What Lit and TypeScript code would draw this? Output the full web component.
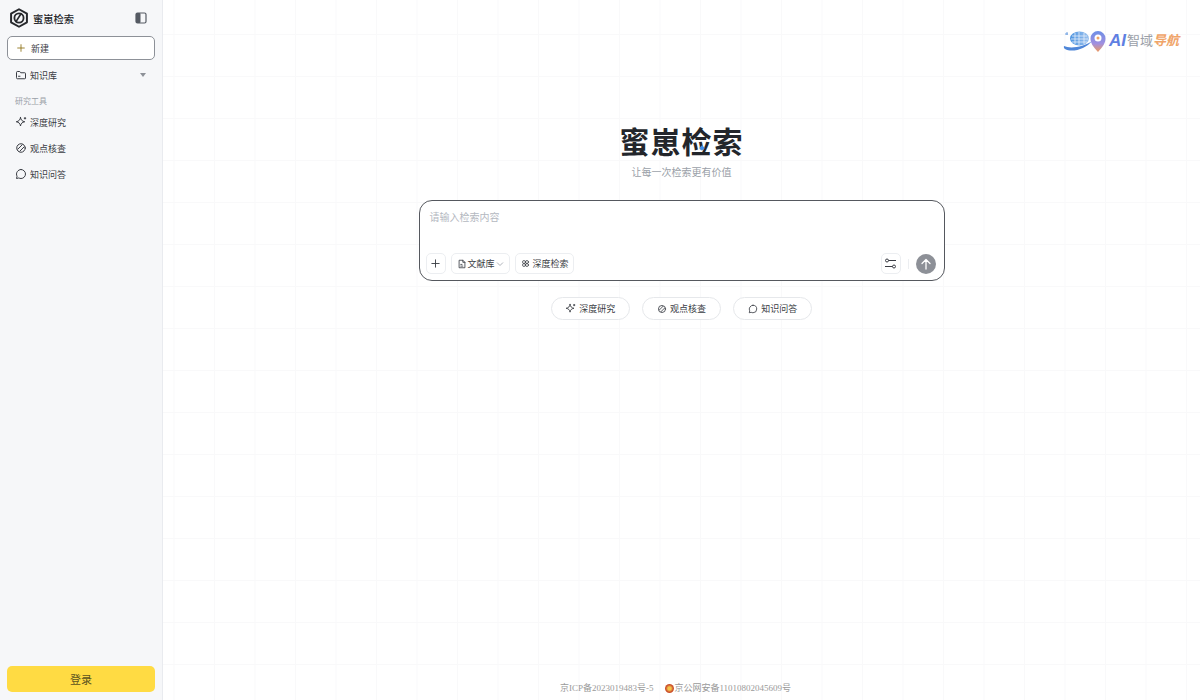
import { LitElement, html, css, svg } from "lit"
import { customElement } from "lit/decorators.js"

const icon = (body: unknown, size = 12) => html`<svg class="ic" width=${size} height=${size} viewBox="0 0 24 24" fill="none" stroke="currentColor" stroke-width="2" stroke-linecap="round" stroke-linejoin="round">${body}</svg>`

const sparkle = svg`<path d="M11 3c.8 5 3 7.500 8.500 8.500-5.500 1-7.700 3.500-8.500 8.500-.8-5-3-7.500-8.500-8.500C8 10.500 10.200 8 11 3z"/><path d="M20 3v3M18.500 4.500h3"/>`
const check = svg`<circle cx="12" cy="12" r="8.500"/><path d="M5.500 14.500L14.500 5.500M9.500 18.500L18.500 9.500"/>`
const bubble = svg`<path d="M12 3a9 9 0 0 1 0 18c-1.600 0-3.100-.4-4.400-1.100L3 21l1.100-4.600A9 9 0 0 1 12 3z"/>`
const folder = svg`<path d="M3 6.500A1.500 1.500 0 0 1 4.500 5h5l2 2.500h8A1.500 1.500 0 0 1 21 9v9a1.500 1.500 0 0 1-1.500 1.500h-15A1.500 1.500 0 0 1 3 18z"/><path d="M7 14.500h3"/>`
const plus = svg`<path d="M12 4v16M4 12h16"/>`
const doc = svg`<path d="M6 3h8l5 5v13H6z"/><path d="M14 3v5h5M9 13h3M9 17h5"/>`
const knots = svg`<circle cx="8" cy="8" r="4"/><circle cx="16" cy="8" r="4"/><circle cx="8" cy="16" r="4"/><circle cx="16" cy="16" r="4"/>`

@customElement("app-root")
export class AppRoot extends LitElement {
   render() {
      return html`
         <aside class="side">
            <div class="brand">
               <svg width="20" height="20" viewBox="0 0 24 24" fill="none" stroke="#26282c" stroke-width="2.400" stroke-linejoin="round">
                  <path d="M12 1.500l9.500 5.300v10.400L12 22.500l-9.500-5.300V6.800z"/>
                  <circle cx="12" cy="12" r="5.500" stroke-width="2.200"/>
                  <path d="M8 17L15 6" stroke-width="2"/>
               </svg>
               <span class="brand-name">蜜崽检索</span>
               <svg class="toggle" width="12" height="12" viewBox="0 0 12 12">
                  <rect x="1" y="1" width="10" height="10" rx="1.500" fill="none" stroke="#555a63" stroke-width="1.200"/>
                  <rect x="1" y="1" width="4.500" height="10" rx="1" fill="#555a63"/>
               </svg>
            </div>
            <button class="new"><span class="new-plus">${icon(plus, 10)}</span>新建</button>
            <div class="item first">${icon(folder)}<span>知识库</span><i class="caret"></i></div>
            <div class="group">研究工具</div>
            <div class="item">${icon(sparkle)}<span>深度研究</span></div>
            <div class="item">${icon(check)}<span>观点核查</span></div>
            <div class="item">${icon(bubble)}<span>知识问答</span></div>
            <div class="spacer"></div>
            <button class="login">登录</button>
         </aside>
         <main class="main">
            <div class="badge">
               <svg width="44" height="24" viewBox="0 0 44 24">
                  <defs>
                     <linearGradient id="brain" x1="0" x2="1"><stop offset="0" stop-color="#4d94e0"/><stop offset="1" stop-color="#9cc2ee"/></linearGradient>
                     <linearGradient id="pin" x1="0" x2="0" y1="0" y2="1"><stop offset="0" stop-color="#6d8fe6"/><stop offset=".6" stop-color="#a08fe0"/><stop offset="1" stop-color="#f09a5e"/></linearGradient>
                  </defs>
                  <path d="M1 17c6 3 20 1 28-5-6 8-20 12-27 8-1-.6-1.400-1.800-1-3z" fill="#4f86d8"/>
                  <ellipse cx="16.500" cy="9.500" rx="9.500" ry="7" fill="url(#brain)"/>
                  <path d="M9 7h15M8 10h17M9 13h15M16 3v13M12 4v11M21 4v11" stroke="#e4eefa" stroke-width=".8"/>
                  <path d="M2 5h3M4 3v3" stroke="#6d9fe0" stroke-width="1"/>
                  <path d="M35 23c-5-5.500-7.500-9-7.500-13.500a7.500 7.500 0 0 1 15 0C42.500 14 40 17.500 35 23z" fill="url(#pin)"/>
                  <circle cx="35" cy="9" r="3.500" fill="#fff"/>
                  <circle cx="35" cy="9" r="1.500" fill="#f0a468"/>
               </svg>
               <span class="ai">AI</span><span class="zy">智域</span><span class="dh">导航</span>
            </div>
            <div class="center">
               <h1 class="title">蜜崽检索<i class="spark"></i></h1>
               <div class="sub">让每一次检索更有价值</div>
               <div class="box">
                  <div class="ph">请输入检索内容</div>
                  <div class="tools">
                     <button class="chip square">${icon(plus, 11)}</button>
                     <button class="chip">${icon(doc, 10)}文献库<svg class="chev" width="8" height="8" viewBox="0 0 8 8" fill="none" stroke="#9a9fa8" stroke-width=".8"><path d="M1 2.500l3 3 3-3"/></svg></button>
                     <button class="chip deep">${icon(knots, 9)}<span>深度检索</span></button>
                     <div class="spacer"></div>
                     <button class="chip square">
                        <svg width="13" height="13" viewBox="0 0 13 13" fill="none" stroke="#3a3d44" stroke-width="1">
                           <circle cx="3" cy="3.500" r="1.500"/><path d="M4.500 3.500H12"/>
                           <circle cx="10" cy="9.500" r="1.500"/><path d="M1 9.500h7.500"/>
                        </svg>
                     </button>
                     <i class="sep"></i>
                     <button class="send">
                        <svg width="12" height="12" viewBox="0 0 12 12" fill="none" stroke="#fff" stroke-width="1.300" stroke-linecap="round" stroke-linejoin="round"><path d="M6 11V1.500M2 5.500l4-4 4 4"/></svg>
                     </button>
                  </div>
               </div>
               <div class="quick">
                  <button class="pill">${icon(sparkle, 11)}深度研究</button>
                  <button class="pill">${icon(check, 10)}观点核查</button>
                  <button class="pill">${icon(bubble, 10)}知识问答</button>
               </div>
            </div>
            <footer class="foot">
               <span>京ICP备2023019483号-5</span>
               <span class="police"><i class="emblem"></i>京公网安备11010802045609号</span>
            </footer>
         </main>
      `
   }

   static styles = css`
      :host {
         display: flex;
         width: 1200px;
         height: 700px;
         overflow: hidden;
         font-family: "Liberation Sans", "Noto Sans CJK SC", sans-serif;
         color: #3a3d44;
         font-size: 9px;
         background: #fff;
      }
      button {
         font: inherit;
         color: inherit;
         cursor: pointer;
      }
      .ic { flex: none; }
      .spacer { flex: 1; }

      .side {
         flex: none;
         box-sizing: border-box;
         width: 163px;
         height: 700px;
         padding: 0 7px 8px;
         display: flex;
         flex-direction: column;
         background: #f6f7f9;
         border-right: 1px solid #e9ebef;
      }
      .brand {
         flex: none;
         height: 36px;
         display: flex;
         align-items: center;
         gap: 4px;
         padding: 0 8px 0 2px;
      }
      .brand-name {
         flex: 1;
         font-size: 10.250px;
         font-weight: 500;
         color: #26282c;
      }
      .new {
         flex: none;
         height: 24px;
         display: flex;
         align-items: center;
         gap: 5px;
         padding: 0 8px;
         background: #fff;
         border: 1px solid #8d9198;
         border-radius: 5px;
         text-align: left;
      }
      .new-plus { display: flex; color: #8a6d10; }
      .item {
         flex: none;
         height: 26px;
         display: flex;
         align-items: center;
         gap: 3px;
         padding: 0 8px;
      }
      .item span { flex: 1; }
      .item.first { margin-top: 2px; padding-right: 9px; }
      .caret {
         width: 0;
         height: 0;
         border-left: 3.500px solid transparent;
         border-right: 3.500px solid transparent;
         border-top: 4px solid #8d9198;
      }
      .group {
         flex: none;
         margin-top: 7px;
         padding: 0 8px;
         height: 14px;
         line-height: 14px;
         font-size: 8px;
         color: #9a9fa8;
      }
      .login {
         flex: none;
         height: 26px;
         border: none;
         border-radius: 5px;
         background: #ffdb43;
         font-size: 11px;
         color: #5b5320;
      }

      .main {
         flex: 1;
         min-width: 0;
         display: flex;
         flex-direction: column;
         position: relative;
         background-color: #fff;
         background-image:
            linear-gradient(to right, #f9f9fa 1px, transparent 1px),
            linear-gradient(to bottom, #f9f9fa 1px, transparent 1px);
         background-size: 40.500px 42px;
         background-position: 10.500px 34px;
      }
      .badge {
         position: absolute;
         top: 29px;
         right: 21px;
         display: flex;
         align-items: center;
         font-weight: 700;
         font-size: 13px;
         line-height: 24px;
         white-space: nowrap;
      }
      .badge svg { flex: none; margin-right: 2px; }
      .badge .ai { color: #5f7fe2; font-style: italic; font-size: 17px; margin-right: 1px; }
      .badge .zy { color: #9aa0a8; font-weight: 400; }
      .badge .dh { color: #f0a468; font-style: italic; }

      .center {
         flex: 1;
         display: flex;
         flex-direction: column;
         align-items: center;
         padding-top: 124px;
      }
      .title {
         position: relative;
         margin: 0;
         font-size: 30px;
         line-height: 38px;
         font-weight: 700;
         letter-spacing: 1px;
         color: #23262b;
      }
      .spark {
         position: absolute;
         left: 80px;
         top: 22px;
         width: 4px;
         height: 4px;
         background: #3f8fe8;
         transform: rotate(45deg);
      }
      .sub {
         margin-top: 3px;
         font-size: 10px;
         line-height: 16px;
         color: #9a9fa8;
      }
      .box {
         box-sizing: border-box;
         width: 526px;
         height: 81px;
         margin-top: 19px;
         padding: 10px 8px 6px 6px;
         display: flex;
         flex-direction: column;
         background: #fff;
         border: 1px solid #55585e;
         border-radius: 13px;
      }
      .ph {
         flex: 1;
         padding-left: 4px;
         font-size: 10px;
         line-height: 14px;
         color: #b4b8bf;
      }
      .tools {
         flex: none;
         display: flex;
         align-items: center;
         gap: 5px;
      }
      .chip {
         height: 21px;
         display: flex;
         align-items: center;
         gap: 1px;
         padding: 0 5px;
         background: #fff;
         border: 1px solid #eceef1;
         border-radius: 5px;
         color: #3a3d44;
      }
      .chip.deep { gap: 3px; padding: 0 4px 0 5px; }
      .square {
         width: 20px;
         padding: 0;
         justify-content: center;
      }
      .sep {
         width: 1px;
         height: 10px;
         margin: 0 2px;
         background: #eceef1;
      }
      .send {
         width: 20px;
         height: 20px;
         padding: 0;
         display: flex;
         align-items: center;
         justify-content: center;
         border: none;
         border-radius: 50%;
         background: #8d9097;
      }
      .quick {
         display: flex;
         gap: 12px;
         margin-top: 16px;
      }
      .pill {
         width: 79.330px;
         height: 23px;
         padding: 0;
         display: flex;
         align-items: center;
         justify-content: center;
         gap: 3px;
         background: #fff;
         border: 1px solid #e6e8eb;
         border-radius: 12px;
         color: #3a3d44;
      }
      .foot {
         flex: none;
         display: flex;
         justify-content: center;
         gap: 12px;
         height: 19px;
         padding-right: 12px;
         font-family: "Liberation Serif", "Noto Sans CJK SC", serif;
         font-size: 9px;
         line-height: 14px;
         color: #9a9a9a;
      }
      .police { display: flex; align-items: center; height: 14px; }
      .emblem {
         width: 9px;
         height: 9px;
         border-radius: 50%;
         background: radial-gradient(circle, #f4c44a 25%, #c9472b 60%, #d99a3c 100%);
      }
   `
}

declare global {
   interface HTMLElementTagNameMap {
      "app-root": AppRoot
   }
}
